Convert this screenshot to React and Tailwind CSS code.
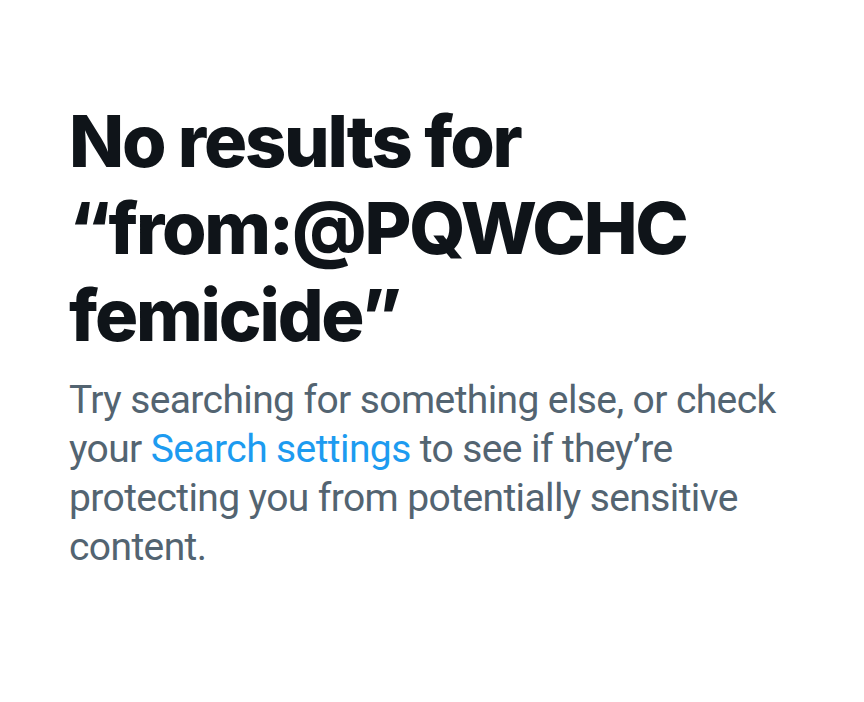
export default function App() {
  return (
    <div className="min-h-[702px] w-[864px] bg-white font-['Inter',sans-serif]">
      <div className="pl-[69px] pr-[60px] pt-[97px]">
        <h1 className="text-[72px] leading-[87px] font-extrabold tracking-[-2.2px] text-[#0f1419]">
          No results for “from:@PQWCHC femicide”
        </h1>
        <p className="mt-[18px] font-['Roboto',sans-serif] text-[39px] leading-[49px] tracking-[-0.6px] text-[#536471]">
          Try searching for something else, or check your{' '}
          <span className="text-[#1d9bf0]">Search settings</span> to see if they’re protecting you from potentially sensitive content.
        </p>
      </div>
    </div>
  );
}
